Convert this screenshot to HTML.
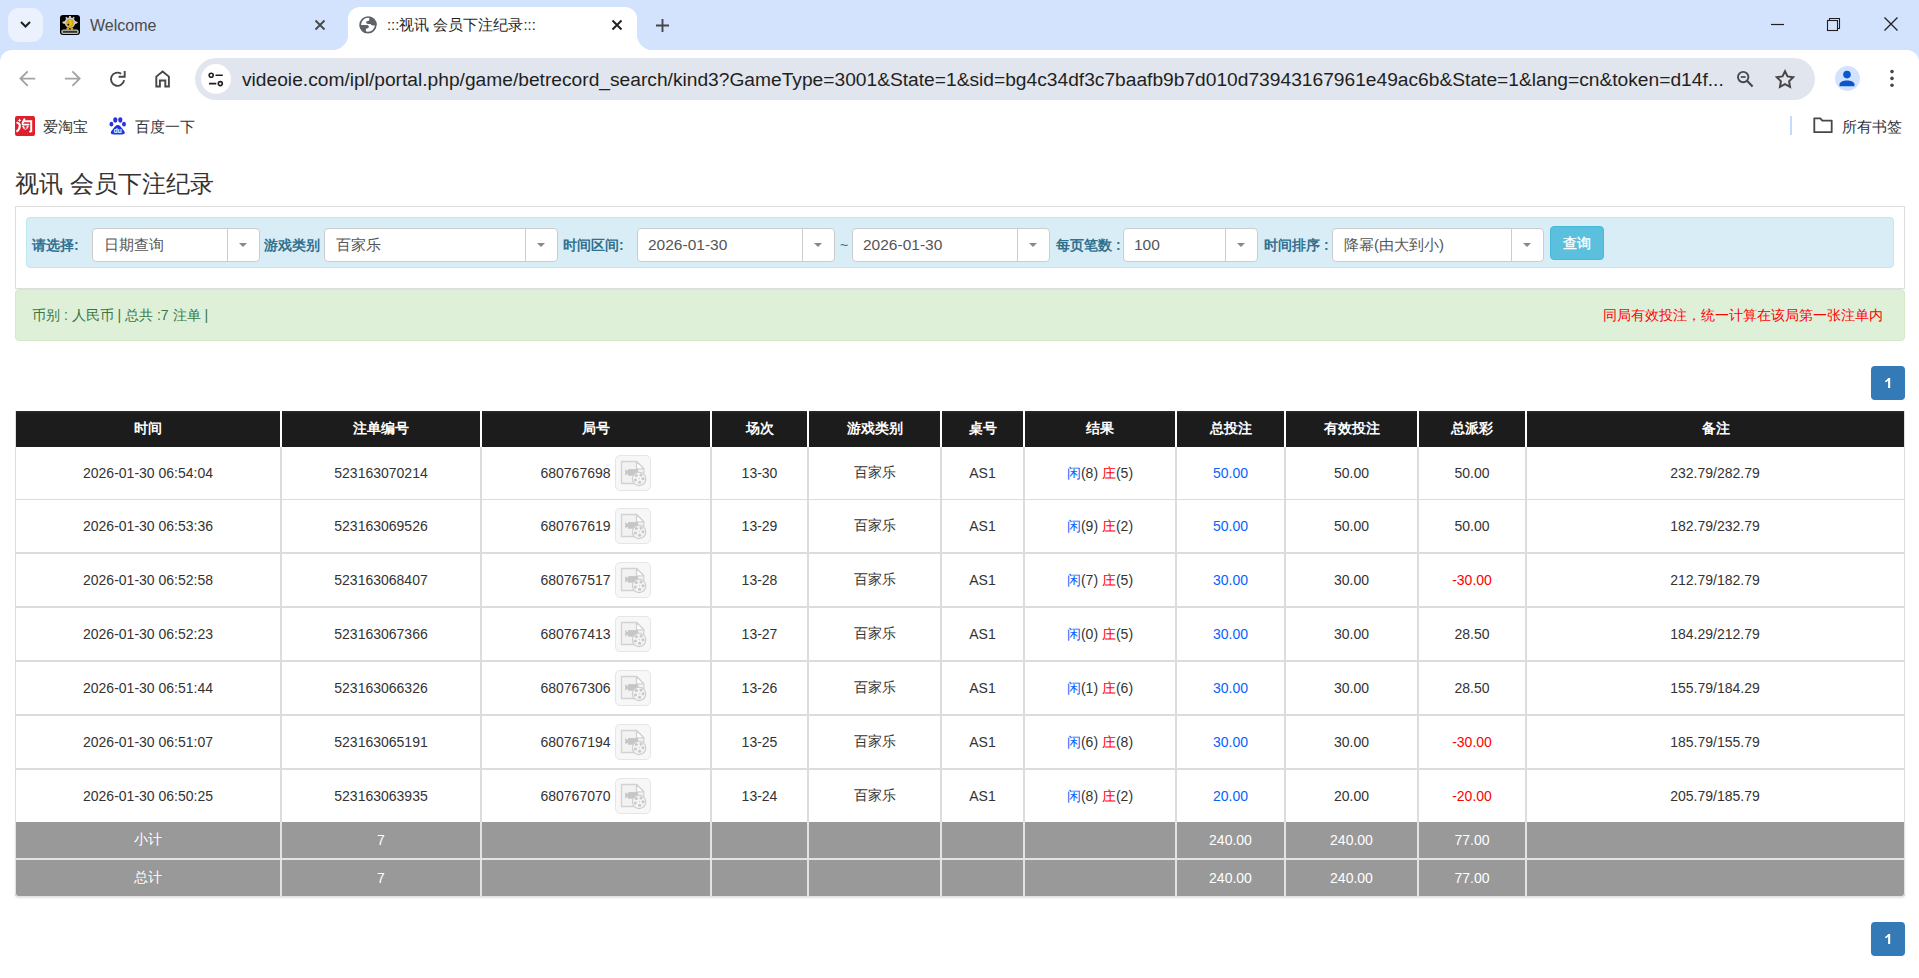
<!DOCTYPE html>
<html><head><meta charset="utf-8">
<style>
*{box-sizing:border-box;margin:0;padding:0}
html,body{width:1919px;height:978px;overflow:hidden;background:#fff;font-family:"Liberation Sans",sans-serif;color:#333;position:relative}
.a{position:absolute}
/* chrome */
#strip{position:absolute;left:0;top:0;width:1919px;height:62px;background:#d3e3fd}
#ddbtn{position:absolute;left:8px;top:8px;width:35px;height:34px;border-radius:11px;background:#ebf1fd}
.tabt{position:absolute;font-size:16px;color:#1f1f1f;white-space:nowrap}
#acttab{position:absolute;left:348px;top:7px;width:289px;height:43px;background:#fff;border-radius:12px 12px 0 0}
.curve{position:absolute;width:16px;height:16px;top:34px}
#toolbar{position:absolute;left:0;top:50px;width:1919px;height:60px;background:#fff;border-radius:12px 12px 0 0}
#omni{position:absolute;left:195px;top:58px;width:1620px;height:42px;border-radius:21px;background:#e1e5ed}
#tune{position:absolute;left:201px;top:64px;width:30px;height:30px;border-radius:15px;background:#fff}
#url{position:absolute;left:242px;top:69px;font-size:19.2px;color:#1f1f1f;white-space:nowrap;letter-spacing:0px}
.bm{position:absolute;font-size:15px;color:#333;white-space:nowrap;margin-top:1px}
/* page */
h3{position:absolute;left:15px;top:169px;font-size:24px;font-weight:normal;color:#333;white-space:nowrap;line-height:30px}
#panel{position:absolute;left:15px;top:206px;width:1890px;height:83px;border:1px solid #ddd;background:#fff}
#ainfo{position:absolute;left:26px;top:217px;width:1868px;height:51px;border:1px solid #bce8f1;background:#d9edf7;border-radius:4px}
.lbl{position:absolute;top:236px;font-size:14px;font-weight:bold;color:#31708f;white-space:nowrap;line-height:18px}
.sel{position:absolute;top:228px;height:34px;border:1px solid #ccc;border-radius:4px;background:#fff}
.sel .tx{position:absolute;left:10px;top:7px;font-size:15.5px;color:#555;white-space:nowrap;line-height:18px}
.sel .dv{position:absolute;right:31px;top:0;width:1px;height:32px;background:#ccc}
.sel .ar{position:absolute;right:12px;top:14px;width:0;height:0;border-left:4px solid transparent;border-right:4px solid transparent;border-top:4px solid #888}
#btn{position:absolute;left:1550px;top:226px;width:54px;height:34px;border-radius:4px;background:#5bc0de;border:1px solid #46b8da;color:#fff;font-size:14px;text-align:center;line-height:32px;-webkit-text-stroke:0.35px #fff}
#asucc{position:absolute;left:15px;top:289px;width:1890px;height:52px;border:1px solid #d6e9c6;background:#dff0d8;border-radius:4px}
#asucc .l{position:absolute;left:16px;top:16px;font-size:14px;color:#3c763d;white-space:nowrap;line-height:18px}
#asucc .r{position:absolute;right:21px;top:16px;font-size:14px;color:#f00;white-space:nowrap;line-height:18px}
.pg{position:absolute;left:1871px;width:34px;height:34px;border-radius:4px;background:#337ab7;color:#fff;font-size:14px;font-weight:normal;text-align:center;line-height:34px;-webkit-text-stroke:0.3px #fff}
/* table */
#tbg{position:absolute;left:15px;top:411px;width:1890px;height:485px;background:#fff;border-left:1px solid #ddd;border-right:1px solid #ddd}
.vl{position:absolute;top:447px;width:2px;height:375px;background:#dcdcdc}
.hl{position:absolute;left:15px;width:1889px;background:#dcdcdc}
.c{position:absolute;display:flex;align-items:center;justify-content:center;font-size:14px;white-space:nowrap}
.th{background:linear-gradient(#2b2b2b,#1c1c1c 3px);color:#fff;font-weight:bold}
.td{color:#333}
.tg{background:#999;color:#fff}
#tgrid{position:absolute;left:15px;top:822px;width:1890px;height:75px;background:#e3e3e3;border-radius:0 0 4px 4px;box-shadow:0 1px 2px rgba(0,0,0,.12)}
.bl{color:#0663ff}
.jn{position:relative;top:1px;left:-1px}
.rd{color:#f00}
.vid{display:inline-block;vertical-align:middle;width:36px;height:36px;margin-left:3px;position:relative;top:0px;border:1px solid #e6e6e6;border-radius:5px;background:#f7f7f7;position:relative}
.vid svg{position:absolute;left:4px;top:4px}
</style></head><body>
<div id="strip"></div>
<div id="ddbtn"></div>
<svg class="a" style="left:20px;top:21px" width="11" height="7" viewBox="0 0 11 7"><path d="M1 1l4.5 4.5L10 1" fill="none" stroke="#1f1f1f" stroke-width="2"/></svg>
<!-- tab 1 favicon -->
<svg class="a" style="left:60px;top:15px" width="20" height="20" viewBox="0 0 20 20"><rect x="0" y="0" width="20" height="20" rx="3" fill="#000"/><g fill="#c8c8c8"><circle cx="10" cy="7.600" r="5.300"/><rect x="9" y="1" width="2" height="2"/><rect x="5.600" y="2" width="1.800" height="2" transform="rotate(-35 6.500 3)"/><rect x="12.600" y="2" width="1.800" height="2" transform="rotate(35 13.500 3)"/><path d="M2 7.500q1.500-2 3.500-1.500l.5 3q-2 .5-4-1.500z"/><path d="M18 7.500q-1.500-2-3.500-1.500l-.5 3q2 .5 4-1.500z"/></g><ellipse cx="10" cy="8" rx="3.700" ry="4" fill="#d9a30e"/><path d="M9.200 5.200l2 .8-1.300 1.600 1.600 1-1.800 2.200" stroke="#f6c82a" stroke-width="1.100" fill="none"/><circle cx="8.300" cy="9.600" r=".9" fill="#111"/><circle cx="7.800" cy="13.600" r="1.300" fill="#e0a80c"/><circle cx="11.900" cy="13.600" r="1.300" fill="#e0a80c"/><rect x="1.300" y="14.600" width="17.400" height="4.300" rx="2" fill="#bdbdbd"/><rect x="2.800" y="15.800" width="14.400" height="2" fill="#333"/></svg>
<div class="tabt" style="left:90px;top:17px;color:#4a4a4a">Welcome</div>
<svg class="a" style="left:314px;top:19px" width="12" height="12" viewBox="0 0 12 12"><path d="M1.5 1.5l9 9M10.5 1.5l-9 9" stroke="#474747" stroke-width="1.8"/></svg>
<!-- active tab -->
<div id="acttab"></div>
<div class="curve" style="left:332px;background:radial-gradient(circle at 0 0,#d3e3fd 16px,#fff 16.5px)"></div>
<div class="curve" style="left:637px;background:radial-gradient(circle at 100% 0,#d3e3fd 16px,#fff 16.5px)"></div>
<svg class="a" style="left:356px;top:13px" width="24" height="24" viewBox="0 0 24 24"><defs><clipPath id="gc"><circle cx="12" cy="11.8" r="8.6"/></clipPath></defs><circle cx="12" cy="11.8" r="7.8" fill="none" stroke="#5f6368" stroke-width="1.7"/><g clip-path="url(#gc)" fill="#5f6368"><path d="M13.300 2L13.300 6.700C13.300 7.500 12.500 8 11.600 8C10.700 8 10.200 8.800 10.200 9.500C10.200 10.400 11 10.900 12 10.900L14 10.900C15.200 10.900 15.400 12.500 16.500 12.500L21 12.300L21 2Z"/><path d="M2 12L11 12C12 12 12.800 12.800 12.800 13.800C12.800 14.800 12 15.500 11 15.500C10.300 15.500 9.900 16 9.900 16.700L9.900 22L2 22Z"/></g></svg>
<div class="tabt" style="left:387px;top:16px;font-size:14.8px">:::视讯 会员下注纪录:::</div>
<svg class="a" style="left:611px;top:19px" width="12" height="12" viewBox="0 0 12 12"><path d="M1.5 1.5l9 9M10.5 1.5l-9 9" stroke="#1f1f1f" stroke-width="1.9"/></svg>
<svg class="a" style="left:656px;top:19px" width="13" height="13" viewBox="0 0 13 13"><path d="M6.5 0v13M0 6.5h13" stroke="#474747" stroke-width="1.9"/></svg>
<!-- window controls -->
<svg class="a" style="left:1770px;top:17px" width="15" height="15" viewBox="0 0 15 15"><path d="M1 7.5h13" stroke="#1f1f1f" stroke-width="1.2"/></svg>
<svg class="a" style="left:1826px;top:17px" width="15" height="15" viewBox="0 0 15 15"><rect x="1.500" y="3.500" width="10" height="10" fill="none" stroke="#1f1f1f" stroke-width="1.100"/><path d="M3.500 3.500V1.500h10v10h-2" fill="none" stroke="#1f1f1f" stroke-width="1.100"/></svg>
<svg class="a" style="left:1883px;top:16px" width="16" height="16" viewBox="0 0 16 16"><path d="M1.5 1.5l13 13M14.5 1.5l-13 13" stroke="#1f1f1f" stroke-width="1.3"/></svg>
<!-- toolbar -->
<div id="toolbar"></div>
<svg class="a" style="left:19px;top:70px" width="17" height="17" viewBox="0 0 17 17"><path d="M16.200 8.600H2M8.700 1.400L1.500 8.600l7.200 7.200" fill="none" stroke="#a4a4a4" stroke-width="1.900"/></svg>
<svg class="a" style="left:64px;top:70px" width="17" height="17" viewBox="0 0 17 17"><path d="M.900 8.600H15M8.400 1.400l7.200 7.200-7.200 7.200" fill="none" stroke="#a4a4a4" stroke-width="1.900"/></svg>
<svg class="a" style="left:108px;top:70px" width="18" height="18" viewBox="0 0 18 18"><path d="M16.100 10.200A6.600 6.600 0 1 1 13.200 3.700" fill="none" stroke="#474747" stroke-width="1.900"/><path d="M10.600 6.800h6.100V1" fill="none" stroke="#474747" stroke-width="1.900"/></svg>
<svg class="a" style="left:154px;top:69px" width="18" height="19" viewBox="0 0 18 19"><path d="M2.300 17.500V7.600L8.600 2.400l6.300 5.200v9.900h-3.600v-6H5.900v6z" fill="none" stroke="#474747" stroke-width="1.900"/></svg>
<div id="omni"></div>
<div id="tune"></div>
<svg class="a" style="left:208px;top:72px" width="16" height="15" viewBox="0 0 16 15"><circle cx="3.200" cy="3.200" r="2" fill="none" stroke="#1f1f1f" stroke-width="1.600"/><path d="M7.500 3.200h7.300M1 11.600h7.300" stroke="#1f1f1f" stroke-width="1.600"/><circle cx="12.300" cy="11.600" r="2" fill="none" stroke="#1f1f1f" stroke-width="1.600"/></svg>
<div id="url">videoie.com/ipl/portal.php/game/betrecord_search/kind3?GameType=3001&amp;State=1&amp;sid=bg4c34df3c7baafb9b7d010d73943167961e49ac6b&amp;State=1&amp;lang=cn&amp;token=d14f...</div>
<svg class="a" style="left:1736px;top:70px" width="19" height="19" viewBox="0 0 19 19"><circle cx="7.200" cy="7.100" r="5.200" fill="none" stroke="#474747" stroke-width="1.900"/><path d="M11 10.800l5.600 5.800" stroke="#474747" stroke-width="2.100"/><path d="M4.800 7h4.800" stroke="#474747" stroke-width="1.700"/></svg>
<svg class="a" style="left:1774px;top:68px" width="22" height="22" viewBox="0 0 22 22"><path d="M11.00 3.30 L13.53 8.42 L19.18 9.24 L15.09 13.23 L16.05 18.86 L11.00 16.20 L5.95 18.86 L6.91 13.23 L2.82 9.24 L8.47 8.42Z" fill="none" stroke="#474747" stroke-width="2" stroke-linejoin="miter"/></svg>
<div class="a" style="left:1835px;top:66px;width:25px;height:25px;border-radius:13px;background:#d3e3fd"></div>
<svg class="a" style="left:1838px;top:69px" width="18" height="19" viewBox="0 0 18 19"><circle cx="9" cy="5.600" r="3.800" fill="#0b57d0"/><path d="M1.500 17.200v-1.600c0-2.500 3.600-4 7.500-4s7.500 1.500 7.500 4v1.600z" fill="#0b57d0"/></svg>
<svg class="a" style="left:1889px;top:69px" width="6" height="20" viewBox="0 0 6 20"><circle cx="3" cy="2.600" r="1.800" fill="#474747"/><circle cx="3" cy="9.400" r="1.800" fill="#474747"/><circle cx="3" cy="16.200" r="1.800" fill="#474747"/></svg>
<!-- bookmarks -->
<svg class="a" style="left:15px;top:116px" width="20" height="20" viewBox="0 0 20 20"><rect width="20" height="20" rx="2" fill="#df1f2c"/><g fill="none" stroke="#fff" stroke-linecap="round"><path d="M2.400 6.800Q4 7.300 4.700 8.800" stroke-width="2.200"/><path d="M4.800 10.200Q4.600 13.300 2.300 15" stroke-width="2.300"/><path d="M9.400 3.300L7.600 7" stroke-width="2"/><path d="M9.200 5.300H16.200V15.300L15 15.600" stroke-width="2"/><path d="M7.600 8.600H13.600" stroke-width="1.700"/><path d="M8.300 10.600Q10.300 15.200 12.700 10.600" stroke-width="1.800"/></g><path d="M4.600 2.600l.6 1.200 1.200.6-1.200.6-.6 1.200-.6-1.200-1.200-.6 1.200-.6z" fill="#fff"/><path d="M9.600 11.600l.9 1.500.9-1.500" stroke="#df1f2c" stroke-width=".9" fill="none"/></svg>
<div class="bm" style="left:43px;top:117px">爱淘宝</div>
<svg class="a" style="left:109px;top:117px" width="18" height="19" viewBox="0 0 18 19"><g fill="#2932e1"><ellipse cx="6.300" cy="3" rx="2.100" ry="2.700"/><ellipse cx="11.300" cy="3" rx="2.100" ry="2.700"/><ellipse cx="2.400" cy="7.200" rx="1.900" ry="2.400"/><ellipse cx="15" cy="7.200" rx="1.900" ry="2.400"/><path d="M8.800 8C10.800 8 12 10 13.600 12 15.400 14 16.200 15.400 15.600 16.600 15 17.600 13.400 17.500 8.800 17.500S2.600 17.600 2 16.600C1.400 15.400 2.200 14 4 12 5.600 10 6.800 8 8.800 8z"/></g><text x="8.800" y="16.300" font-size="6.600" text-anchor="middle" fill="#fff" font-weight="bold" font-family="Liberation Sans">du</text></svg>
<div class="bm" style="left:135px;top:117px">百度一下</div>
<div class="a" style="left:1790px;top:116px;width:2px;height:19px;background:#c6dafc"></div>
<svg class="a" style="left:1812px;top:116px" width="22" height="18" viewBox="0 0 22 18"><path d="M2.300 16.200V2.300H8.300L10.300 4.600H19.700V16.200Z" fill="none" stroke="#474747" stroke-width="1.800" stroke-linejoin="round"/></svg>
<div class="bm" style="left:1842px;top:117px">所有书签</div>

<!-- page -->
<h3>视讯 会员下注纪录</h3>
<div id="panel"></div>
<div id="ainfo"></div>
<div class="lbl" style="left:32px">请选择:</div>
<div class="sel" style="left:92px;width:168px"><div class="tx" style="font-size:14.9px;left:11px;top:6.5px">日期查询</div><div class="dv"></div><div class="ar"></div></div>
<div class="lbl" style="left:264px">游戏类别</div>
<div class="sel" style="left:324px;width:234px"><div class="tx" style="font-size:14.9px;left:11px;top:6.5px">百家乐</div><div class="dv"></div><div class="ar"></div></div>
<div class="lbl" style="left:563px">时间区间:</div>
<div class="sel" style="left:637px;width:198px"><div class="tx">2026-01-30</div><div class="dv"></div><div class="ar"></div></div>
<div class="lbl" style="left:840px;font-weight:normal">~</div>
<div class="sel" style="left:852px;width:198px"><div class="tx">2026-01-30</div><div class="dv"></div><div class="ar"></div></div>
<div class="lbl" style="left:1056px">每页笔数 :</div>
<div class="sel" style="left:1123px;width:135px"><div class="tx">100</div><div class="dv"></div><div class="ar"></div></div>
<div class="lbl" style="left:1264px">时间排序 :</div>
<div class="sel" style="left:1332px;width:212px"><div class="tx" style="font-size:14.9px;left:11px;top:6.5px">降幂(由大到小)</div><div class="dv"></div><div class="ar"></div></div>
<div id="btn">查询</div>
<div id="asucc"><div class="l">币别 : 人民币 | 总共 :7 注单 |</div><div class="r">同局有效投注，统一计算在该局第一张注单内</div></div>
<div class="pg" style="top:366px"><svg width="16" height="16" viewBox="0 0 16 16" style="position:absolute;left:9px;top:9px"><path d="M10.200 3V12.900H8.100V5.700C7.400 6.400 6.300 7 5.200 7.300V5.700C6.600 5.200 7.600 4.200 8.100 3Z" fill="#fff"/></svg></div>

<div id="tbg"></div>
<div id="tgrid"></div>
<div class="vl" style="left:280px"></div>
<div class="vl" style="left:480px"></div>
<div class="vl" style="left:710px"></div>
<div class="vl" style="left:807px"></div>
<div class="vl" style="left:940px"></div>
<div class="vl" style="left:1023px"></div>
<div class="vl" style="left:1175px"></div>
<div class="vl" style="left:1284px"></div>
<div class="vl" style="left:1417px"></div>
<div class="vl" style="left:1525px"></div>
<div class="hl" style="top:499px;height:1px"></div>
<div class="hl" style="top:552px;height:2px"></div>
<div class="hl" style="top:606px;height:2px"></div>
<div class="hl" style="top:660px;height:2px"></div>
<div class="hl" style="top:714px;height:2px"></div>
<div class="hl" style="top:768px;height:2px"></div>
<div class="c th" style="left:16px;top:411px;width:264px;height:36px">时间</div>
<div class="c th" style="left:282px;top:411px;width:198px;height:36px">注单编号</div>
<div class="c th" style="left:482px;top:411px;width:228px;height:36px">局号</div>
<div class="c th" style="left:712px;top:411px;width:95px;height:36px">场次</div>
<div class="c th" style="left:809px;top:411px;width:131px;height:36px">游戏类别</div>
<div class="c th" style="left:942px;top:411px;width:81px;height:36px">桌号</div>
<div class="c th" style="left:1025px;top:411px;width:150px;height:36px">结果</div>
<div class="c th" style="left:1177px;top:411px;width:107px;height:36px">总投注</div>
<div class="c th" style="left:1286px;top:411px;width:131px;height:36px">有效投注</div>
<div class="c th" style="left:1419px;top:411px;width:106px;height:36px">总派彩</div>
<div class="c th" style="left:1527px;top:411px;width:377px;height:36px">备注</div>
<div class="c td" style="left:15px;top:447px;width:266px;height:52px"><span>2026-01-30 06:54:04</span></div>
<div class="c td" style="left:281px;top:447px;width:200px;height:52px"><span>523163070214</span></div>
<div class="c td" style="left:481px;top:447px;width:230px;height:52px"><span><span class="jn">680767698</span><span class="vid"><svg width="28" height="28" viewBox="0 0 28 28"><path d="M1.500 1.500h15l7.300 7.300v14.700h-22.300z" fill="#f2f2f2" stroke="#d2d2d2" stroke-width="1.300"/><path d="M16.500 1.500v7.300h7.300z" fill="#fff" stroke="#d2d2d2" stroke-width="1.300" stroke-linejoin="round"/><path d="M5.200 9.300l3 1.900v2.400l-3 1.900z" fill="#c6c6c6"/><rect x="8" y="9.100" width="10.200" height="6.600" fill="#c6c6c6"/><circle cx="19.100" cy="18.900" r="6.700" fill="#f4f4f4" stroke="#cdcdcd" stroke-width="1.100"/><circle cx="16.300" cy="15.600" r="1.500" fill="#c8c8c8"/><circle cx="21" cy="14.900" r="1.500" fill="#c8c8c8"/><circle cx="23" cy="18.700" r="1.500" fill="#c8c8c8"/><circle cx="19.600" cy="22.200" r="1.500" fill="#c8c8c8"/><circle cx="15.400" cy="20" r="1.500" fill="#c8c8c8"/><circle cx="19.300" cy="18.600" r=".6" fill="#c8c8c8"/></svg></span></span></div>
<div class="c td" style="left:711px;top:447px;width:97px;height:52px"><span>13-30</span></div>
<div class="c td" style="left:808px;top:447px;width:133px;height:52px"><span>百家乐</span></div>
<div class="c td" style="left:941px;top:447px;width:83px;height:52px"><span>AS1</span></div>
<div class="c td" style="left:1024px;top:447px;width:152px;height:52px"><span><span style="position:relative;top:1px"><span class="bl">闲</span>(8) <span class="rd">庄</span>(5)</span></span></div>
<div class="c td" style="left:1176px;top:447px;width:109px;height:52px"><span><span class="bl">50.00</span></span></div>
<div class="c td" style="left:1285px;top:447px;width:133px;height:52px"><span>50.00</span></div>
<div class="c td" style="left:1418px;top:447px;width:108px;height:52px"><span>50.00</span></div>
<div class="c td" style="left:1526px;top:447px;width:378px;height:52px"><span>232.79/282.79</span></div>
<div class="c td" style="left:15px;top:500px;width:266px;height:52px"><span>2026-01-30 06:53:36</span></div>
<div class="c td" style="left:281px;top:500px;width:200px;height:52px"><span>523163069526</span></div>
<div class="c td" style="left:481px;top:500px;width:230px;height:52px"><span><span class="jn">680767619</span><span class="vid"><svg width="28" height="28" viewBox="0 0 28 28"><path d="M1.500 1.500h15l7.300 7.300v14.700h-22.300z" fill="#f2f2f2" stroke="#d2d2d2" stroke-width="1.300"/><path d="M16.500 1.500v7.300h7.300z" fill="#fff" stroke="#d2d2d2" stroke-width="1.300" stroke-linejoin="round"/><path d="M5.200 9.300l3 1.900v2.400l-3 1.900z" fill="#c6c6c6"/><rect x="8" y="9.100" width="10.200" height="6.600" fill="#c6c6c6"/><circle cx="19.100" cy="18.900" r="6.700" fill="#f4f4f4" stroke="#cdcdcd" stroke-width="1.100"/><circle cx="16.300" cy="15.600" r="1.500" fill="#c8c8c8"/><circle cx="21" cy="14.900" r="1.500" fill="#c8c8c8"/><circle cx="23" cy="18.700" r="1.500" fill="#c8c8c8"/><circle cx="19.600" cy="22.200" r="1.500" fill="#c8c8c8"/><circle cx="15.400" cy="20" r="1.500" fill="#c8c8c8"/><circle cx="19.300" cy="18.600" r=".6" fill="#c8c8c8"/></svg></span></span></div>
<div class="c td" style="left:711px;top:500px;width:97px;height:52px"><span>13-29</span></div>
<div class="c td" style="left:808px;top:500px;width:133px;height:52px"><span>百家乐</span></div>
<div class="c td" style="left:941px;top:500px;width:83px;height:52px"><span>AS1</span></div>
<div class="c td" style="left:1024px;top:500px;width:152px;height:52px"><span><span style="position:relative;top:1px"><span class="bl">闲</span>(9) <span class="rd">庄</span>(2)</span></span></div>
<div class="c td" style="left:1176px;top:500px;width:109px;height:52px"><span><span class="bl">50.00</span></span></div>
<div class="c td" style="left:1285px;top:500px;width:133px;height:52px"><span>50.00</span></div>
<div class="c td" style="left:1418px;top:500px;width:108px;height:52px"><span>50.00</span></div>
<div class="c td" style="left:1526px;top:500px;width:378px;height:52px"><span>182.79/232.79</span></div>
<div class="c td" style="left:15px;top:554px;width:266px;height:52px"><span>2026-01-30 06:52:58</span></div>
<div class="c td" style="left:281px;top:554px;width:200px;height:52px"><span>523163068407</span></div>
<div class="c td" style="left:481px;top:554px;width:230px;height:52px"><span><span class="jn">680767517</span><span class="vid"><svg width="28" height="28" viewBox="0 0 28 28"><path d="M1.500 1.500h15l7.300 7.300v14.700h-22.300z" fill="#f2f2f2" stroke="#d2d2d2" stroke-width="1.300"/><path d="M16.500 1.500v7.300h7.300z" fill="#fff" stroke="#d2d2d2" stroke-width="1.300" stroke-linejoin="round"/><path d="M5.200 9.300l3 1.900v2.400l-3 1.900z" fill="#c6c6c6"/><rect x="8" y="9.100" width="10.200" height="6.600" fill="#c6c6c6"/><circle cx="19.100" cy="18.900" r="6.700" fill="#f4f4f4" stroke="#cdcdcd" stroke-width="1.100"/><circle cx="16.300" cy="15.600" r="1.500" fill="#c8c8c8"/><circle cx="21" cy="14.900" r="1.500" fill="#c8c8c8"/><circle cx="23" cy="18.700" r="1.500" fill="#c8c8c8"/><circle cx="19.600" cy="22.200" r="1.500" fill="#c8c8c8"/><circle cx="15.400" cy="20" r="1.500" fill="#c8c8c8"/><circle cx="19.300" cy="18.600" r=".6" fill="#c8c8c8"/></svg></span></span></div>
<div class="c td" style="left:711px;top:554px;width:97px;height:52px"><span>13-28</span></div>
<div class="c td" style="left:808px;top:554px;width:133px;height:52px"><span>百家乐</span></div>
<div class="c td" style="left:941px;top:554px;width:83px;height:52px"><span>AS1</span></div>
<div class="c td" style="left:1024px;top:554px;width:152px;height:52px"><span><span style="position:relative;top:1px"><span class="bl">闲</span>(7) <span class="rd">庄</span>(5)</span></span></div>
<div class="c td" style="left:1176px;top:554px;width:109px;height:52px"><span><span class="bl">30.00</span></span></div>
<div class="c td" style="left:1285px;top:554px;width:133px;height:52px"><span>30.00</span></div>
<div class="c td" style="left:1418px;top:554px;width:108px;height:52px"><span><span class="rd">-30.00</span></span></div>
<div class="c td" style="left:1526px;top:554px;width:378px;height:52px"><span>212.79/182.79</span></div>
<div class="c td" style="left:15px;top:608px;width:266px;height:52px"><span>2026-01-30 06:52:23</span></div>
<div class="c td" style="left:281px;top:608px;width:200px;height:52px"><span>523163067366</span></div>
<div class="c td" style="left:481px;top:608px;width:230px;height:52px"><span><span class="jn">680767413</span><span class="vid"><svg width="28" height="28" viewBox="0 0 28 28"><path d="M1.500 1.500h15l7.300 7.300v14.700h-22.300z" fill="#f2f2f2" stroke="#d2d2d2" stroke-width="1.300"/><path d="M16.500 1.500v7.300h7.300z" fill="#fff" stroke="#d2d2d2" stroke-width="1.300" stroke-linejoin="round"/><path d="M5.200 9.300l3 1.900v2.400l-3 1.900z" fill="#c6c6c6"/><rect x="8" y="9.100" width="10.200" height="6.600" fill="#c6c6c6"/><circle cx="19.100" cy="18.900" r="6.700" fill="#f4f4f4" stroke="#cdcdcd" stroke-width="1.100"/><circle cx="16.300" cy="15.600" r="1.500" fill="#c8c8c8"/><circle cx="21" cy="14.900" r="1.500" fill="#c8c8c8"/><circle cx="23" cy="18.700" r="1.500" fill="#c8c8c8"/><circle cx="19.600" cy="22.200" r="1.500" fill="#c8c8c8"/><circle cx="15.400" cy="20" r="1.500" fill="#c8c8c8"/><circle cx="19.300" cy="18.600" r=".6" fill="#c8c8c8"/></svg></span></span></div>
<div class="c td" style="left:711px;top:608px;width:97px;height:52px"><span>13-27</span></div>
<div class="c td" style="left:808px;top:608px;width:133px;height:52px"><span>百家乐</span></div>
<div class="c td" style="left:941px;top:608px;width:83px;height:52px"><span>AS1</span></div>
<div class="c td" style="left:1024px;top:608px;width:152px;height:52px"><span><span style="position:relative;top:1px"><span class="bl">闲</span>(0) <span class="rd">庄</span>(5)</span></span></div>
<div class="c td" style="left:1176px;top:608px;width:109px;height:52px"><span><span class="bl">30.00</span></span></div>
<div class="c td" style="left:1285px;top:608px;width:133px;height:52px"><span>30.00</span></div>
<div class="c td" style="left:1418px;top:608px;width:108px;height:52px"><span>28.50</span></div>
<div class="c td" style="left:1526px;top:608px;width:378px;height:52px"><span>184.29/212.79</span></div>
<div class="c td" style="left:15px;top:662px;width:266px;height:52px"><span>2026-01-30 06:51:44</span></div>
<div class="c td" style="left:281px;top:662px;width:200px;height:52px"><span>523163066326</span></div>
<div class="c td" style="left:481px;top:662px;width:230px;height:52px"><span><span class="jn">680767306</span><span class="vid"><svg width="28" height="28" viewBox="0 0 28 28"><path d="M1.500 1.500h15l7.300 7.300v14.700h-22.300z" fill="#f2f2f2" stroke="#d2d2d2" stroke-width="1.300"/><path d="M16.500 1.500v7.300h7.300z" fill="#fff" stroke="#d2d2d2" stroke-width="1.300" stroke-linejoin="round"/><path d="M5.200 9.300l3 1.900v2.400l-3 1.900z" fill="#c6c6c6"/><rect x="8" y="9.100" width="10.200" height="6.600" fill="#c6c6c6"/><circle cx="19.100" cy="18.900" r="6.700" fill="#f4f4f4" stroke="#cdcdcd" stroke-width="1.100"/><circle cx="16.300" cy="15.600" r="1.500" fill="#c8c8c8"/><circle cx="21" cy="14.900" r="1.500" fill="#c8c8c8"/><circle cx="23" cy="18.700" r="1.500" fill="#c8c8c8"/><circle cx="19.600" cy="22.200" r="1.500" fill="#c8c8c8"/><circle cx="15.400" cy="20" r="1.500" fill="#c8c8c8"/><circle cx="19.300" cy="18.600" r=".6" fill="#c8c8c8"/></svg></span></span></div>
<div class="c td" style="left:711px;top:662px;width:97px;height:52px"><span>13-26</span></div>
<div class="c td" style="left:808px;top:662px;width:133px;height:52px"><span>百家乐</span></div>
<div class="c td" style="left:941px;top:662px;width:83px;height:52px"><span>AS1</span></div>
<div class="c td" style="left:1024px;top:662px;width:152px;height:52px"><span><span style="position:relative;top:1px"><span class="bl">闲</span>(1) <span class="rd">庄</span>(6)</span></span></div>
<div class="c td" style="left:1176px;top:662px;width:109px;height:52px"><span><span class="bl">30.00</span></span></div>
<div class="c td" style="left:1285px;top:662px;width:133px;height:52px"><span>30.00</span></div>
<div class="c td" style="left:1418px;top:662px;width:108px;height:52px"><span>28.50</span></div>
<div class="c td" style="left:1526px;top:662px;width:378px;height:52px"><span>155.79/184.29</span></div>
<div class="c td" style="left:15px;top:716px;width:266px;height:52px"><span>2026-01-30 06:51:07</span></div>
<div class="c td" style="left:281px;top:716px;width:200px;height:52px"><span>523163065191</span></div>
<div class="c td" style="left:481px;top:716px;width:230px;height:52px"><span><span class="jn">680767194</span><span class="vid"><svg width="28" height="28" viewBox="0 0 28 28"><path d="M1.500 1.500h15l7.300 7.300v14.700h-22.300z" fill="#f2f2f2" stroke="#d2d2d2" stroke-width="1.300"/><path d="M16.500 1.500v7.300h7.300z" fill="#fff" stroke="#d2d2d2" stroke-width="1.300" stroke-linejoin="round"/><path d="M5.200 9.300l3 1.900v2.400l-3 1.900z" fill="#c6c6c6"/><rect x="8" y="9.100" width="10.200" height="6.600" fill="#c6c6c6"/><circle cx="19.100" cy="18.900" r="6.700" fill="#f4f4f4" stroke="#cdcdcd" stroke-width="1.100"/><circle cx="16.300" cy="15.600" r="1.500" fill="#c8c8c8"/><circle cx="21" cy="14.900" r="1.500" fill="#c8c8c8"/><circle cx="23" cy="18.700" r="1.500" fill="#c8c8c8"/><circle cx="19.600" cy="22.200" r="1.500" fill="#c8c8c8"/><circle cx="15.400" cy="20" r="1.500" fill="#c8c8c8"/><circle cx="19.300" cy="18.600" r=".6" fill="#c8c8c8"/></svg></span></span></div>
<div class="c td" style="left:711px;top:716px;width:97px;height:52px"><span>13-25</span></div>
<div class="c td" style="left:808px;top:716px;width:133px;height:52px"><span>百家乐</span></div>
<div class="c td" style="left:941px;top:716px;width:83px;height:52px"><span>AS1</span></div>
<div class="c td" style="left:1024px;top:716px;width:152px;height:52px"><span><span style="position:relative;top:1px"><span class="bl">闲</span>(6) <span class="rd">庄</span>(8)</span></span></div>
<div class="c td" style="left:1176px;top:716px;width:109px;height:52px"><span><span class="bl">30.00</span></span></div>
<div class="c td" style="left:1285px;top:716px;width:133px;height:52px"><span>30.00</span></div>
<div class="c td" style="left:1418px;top:716px;width:108px;height:52px"><span><span class="rd">-30.00</span></span></div>
<div class="c td" style="left:1526px;top:716px;width:378px;height:52px"><span>185.79/155.79</span></div>
<div class="c td" style="left:15px;top:770px;width:266px;height:52px"><span>2026-01-30 06:50:25</span></div>
<div class="c td" style="left:281px;top:770px;width:200px;height:52px"><span>523163063935</span></div>
<div class="c td" style="left:481px;top:770px;width:230px;height:52px"><span><span class="jn">680767070</span><span class="vid"><svg width="28" height="28" viewBox="0 0 28 28"><path d="M1.500 1.500h15l7.300 7.300v14.700h-22.300z" fill="#f2f2f2" stroke="#d2d2d2" stroke-width="1.300"/><path d="M16.500 1.500v7.300h7.300z" fill="#fff" stroke="#d2d2d2" stroke-width="1.300" stroke-linejoin="round"/><path d="M5.200 9.300l3 1.900v2.400l-3 1.900z" fill="#c6c6c6"/><rect x="8" y="9.100" width="10.200" height="6.600" fill="#c6c6c6"/><circle cx="19.100" cy="18.900" r="6.700" fill="#f4f4f4" stroke="#cdcdcd" stroke-width="1.100"/><circle cx="16.300" cy="15.600" r="1.500" fill="#c8c8c8"/><circle cx="21" cy="14.900" r="1.500" fill="#c8c8c8"/><circle cx="23" cy="18.700" r="1.500" fill="#c8c8c8"/><circle cx="19.600" cy="22.200" r="1.500" fill="#c8c8c8"/><circle cx="15.400" cy="20" r="1.500" fill="#c8c8c8"/><circle cx="19.300" cy="18.600" r=".6" fill="#c8c8c8"/></svg></span></span></div>
<div class="c td" style="left:711px;top:770px;width:97px;height:52px"><span>13-24</span></div>
<div class="c td" style="left:808px;top:770px;width:133px;height:52px"><span>百家乐</span></div>
<div class="c td" style="left:941px;top:770px;width:83px;height:52px"><span>AS1</span></div>
<div class="c td" style="left:1024px;top:770px;width:152px;height:52px"><span><span style="position:relative;top:1px"><span class="bl">闲</span>(8) <span class="rd">庄</span>(2)</span></span></div>
<div class="c td" style="left:1176px;top:770px;width:109px;height:52px"><span><span class="bl">20.00</span></span></div>
<div class="c td" style="left:1285px;top:770px;width:133px;height:52px"><span>20.00</span></div>
<div class="c td" style="left:1418px;top:770px;width:108px;height:52px"><span><span class="rd">-20.00</span></span></div>
<div class="c td" style="left:1526px;top:770px;width:378px;height:52px"><span>205.79/185.79</span></div>
<div class="c tg" style="left:16px;top:822px;width:264px;height:36px"><span>小计</span></div>
<div class="c tg" style="left:282px;top:822px;width:198px;height:36px"><span>7</span></div>
<div class="c tg" style="left:482px;top:822px;width:228px;height:36px"><span></span></div>
<div class="c tg" style="left:712px;top:822px;width:95px;height:36px"><span></span></div>
<div class="c tg" style="left:809px;top:822px;width:131px;height:36px"><span></span></div>
<div class="c tg" style="left:942px;top:822px;width:81px;height:36px"><span></span></div>
<div class="c tg" style="left:1025px;top:822px;width:150px;height:36px"><span></span></div>
<div class="c tg" style="left:1177px;top:822px;width:107px;height:36px"><span>240.00</span></div>
<div class="c tg" style="left:1286px;top:822px;width:131px;height:36px"><span>240.00</span></div>
<div class="c tg" style="left:1419px;top:822px;width:106px;height:36px"><span>77.00</span></div>
<div class="c tg" style="left:1527px;top:822px;width:377px;height:36px"><span></span></div>
<div class="c tg" style="left:16px;top:860px;width:264px;height:36px;border-bottom-left-radius:3px"><span>总计</span></div>
<div class="c tg" style="left:282px;top:860px;width:198px;height:36px"><span>7</span></div>
<div class="c tg" style="left:482px;top:860px;width:228px;height:36px"><span></span></div>
<div class="c tg" style="left:712px;top:860px;width:95px;height:36px"><span></span></div>
<div class="c tg" style="left:809px;top:860px;width:131px;height:36px"><span></span></div>
<div class="c tg" style="left:942px;top:860px;width:81px;height:36px"><span></span></div>
<div class="c tg" style="left:1025px;top:860px;width:150px;height:36px"><span></span></div>
<div class="c tg" style="left:1177px;top:860px;width:107px;height:36px"><span>240.00</span></div>
<div class="c tg" style="left:1286px;top:860px;width:131px;height:36px"><span>240.00</span></div>
<div class="c tg" style="left:1419px;top:860px;width:106px;height:36px"><span>77.00</span></div>
<div class="c tg" style="left:1527px;top:860px;width:377px;height:36px;border-bottom-right-radius:3px"><span></span></div>
<div class="pg" style="top:922px"><svg width="16" height="16" viewBox="0 0 16 16" style="position:absolute;left:9px;top:9px"><path d="M10.200 3V12.900H8.100V5.700C7.400 6.400 6.300 7 5.200 7.300V5.700C6.600 5.200 7.600 4.200 8.100 3Z" fill="#fff"/></svg></div>
</body></html>
